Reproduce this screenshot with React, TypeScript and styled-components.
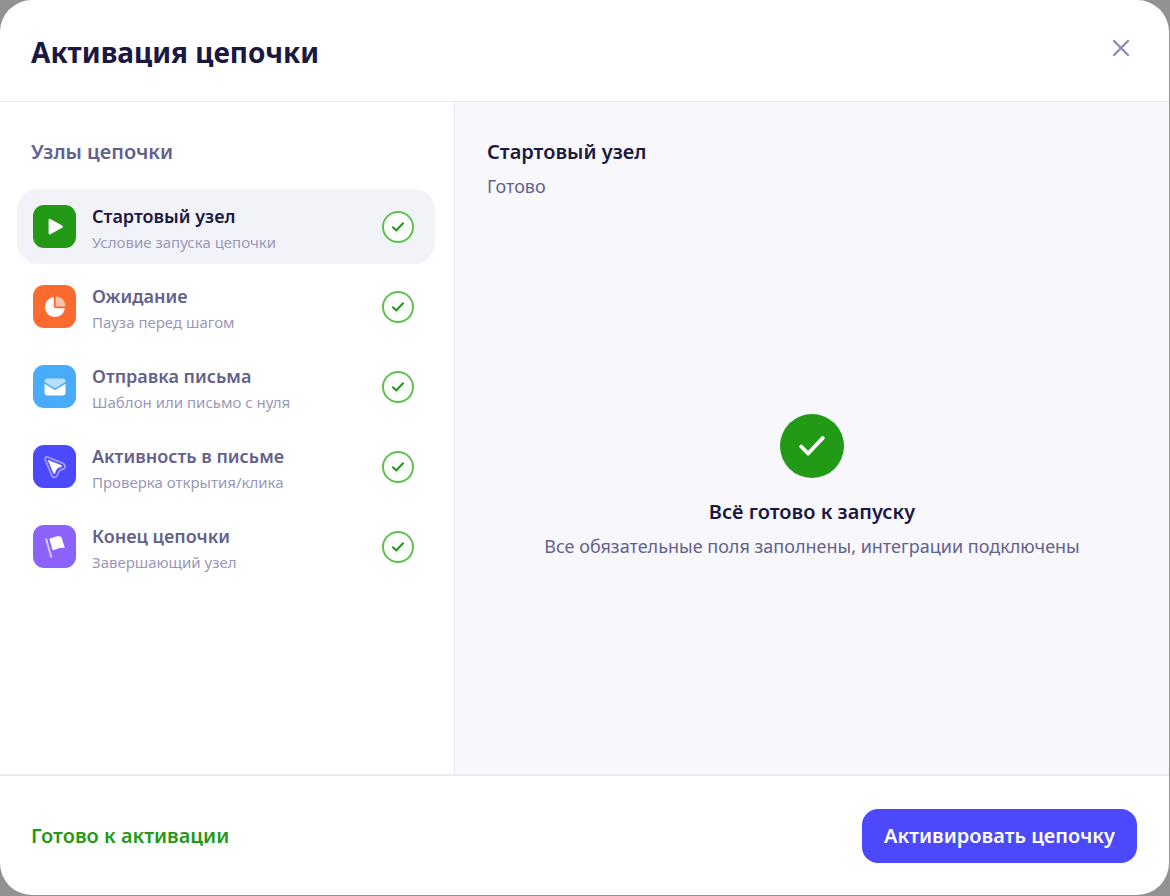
import React from "react";
import styled, { createGlobalStyle } from "styled-components";

const GlobalStyle = createGlobalStyle`
  *, *::before, *::after { box-sizing: border-box; }
  body {
    margin: 0;
    background: #929292;
    font-family: "Noto Sans", "Open Sans", sans-serif;
    color: #1b1841;
  }
  h1, h2, h3, p, ul { margin: 0; padding: 0; }
  button { font-family: inherit; border: 0; cursor: pointer; }
`;

const Backdrop = styled.div`
  min-height: 100vh;
  display: flex;
  padding: 0 1px 1px 0;
`;

const Dialog = styled.section`
  flex: 1;
  min-width: 0;
  display: flex;
  flex-direction: column;
  background: #fff;
  border-radius: 32px;
  overflow: hidden;
`;

const Header = styled.header`
  display: flex;
  justify-content: space-between;
  align-items: flex-start;
  height: 102px;
  padding: 32px 32px 0 31px;
  border-bottom: 1px solid #e9e9f1;
`;

const Title = styled.h1`
  font-size: 28px;
  line-height: 40px;
  font-weight: 700;
`;

const CloseButton = styled.button`
  display: grid;
  place-items: center;
  width: 32px;
  height: 32px;
  padding: 0;
  background: none;
`;

const Body = styled.div`
  flex: 1;
  display: grid;
  grid-template-columns: 455px minmax(0, 1fr);
`;

const Sidebar = styled.nav`
  padding: 36px 19px 32px 17px;
  border-right: 1px solid #e9e9f1;
`;

const SidebarTitle = styled.h2`
  padding-left: 14px;
  margin-bottom: 23px;
  font-size: 20px;
  line-height: 28px;
  font-weight: 600;
  color: #64618c;
`;

const NodeList = styled.ul`
  display: flex;
  flex-direction: column;
  gap: 5px;
  list-style: none;
`;

const NodeButton = styled.button<{ $active: boolean }>`
  display: flex;
  align-items: center;
  gap: 16px;
  width: 100%;
  height: 75px;
  padding: 0 21px 0 16px;
  text-align: left;
  border-radius: 21px;
  background: ${(p) => (p.$active ? "#f2f3f9" : "transparent")};
  color: ${(p) => (p.$active ? "#1b1841" : "#64618c")};
`;

const NodeIcon = styled.span<{ $color: string }>`
  flex: none;
  display: grid;
  place-items: center;
  width: 43px;
  height: 43px;
  border-radius: 11px;
  background: ${(p) => p.$color};
`;

const NodeText = styled.span`
  flex: 1;
  min-width: 0;
  display: flex;
  flex-direction: column;
  padding-top: 4px;
`;

const NodeName = styled.span`
  font-size: 18px;
  line-height: 28px;
  font-weight: 600;
`;

const NodeHint = styled.span`
  font-size: 15px;
  line-height: 25px;
  color: #9a98b9;
`;

const Status = styled.span`
  flex: none;
  display: grid;
  place-items: center;
  width: 32px;
  height: 32px;
  border: 2px solid #5cc24b;
  border-radius: 50%;
  background: #fff;
`;

const Detail = styled.main`
  display: flex;
  flex-direction: column;
  padding: 36px 32px;
  background: #f7f7fc;
`;

const Heading = styled.h2`
  font-size: 20px;
  line-height: 28px;
  font-weight: 600;
`;

const Note = styled.p`
  margin-top: 6px;
  font-size: 18px;
  line-height: 28px;
  color: #64618c;
`;

const Ready = styled.div`
  flex: 1;
  display: flex;
  flex-direction: column;
  align-items: center;
  justify-content: center;
  padding-top: 36px;
  text-align: center;
`;

const ReadyMark = styled.div`
  display: grid;
  place-items: center;
  width: 64px;
  height: 64px;
  margin-bottom: 20px;
  border-radius: 50%;
  background: #229a16;
`;

const Footer = styled.footer`
  display: flex;
  align-items: center;
  justify-content: space-between;
  height: 121px;
  padding: 0 32px 0 31px;
  border-top: 2px solid #e9e9f1;
`;

const FooterStatus = styled.p`
  font-size: 20px;
  line-height: 28px;
  font-weight: 600;
  color: #229a16;
`;

const PrimaryButton = styled.button`
  height: 54px;
  padding: 0 22px;
  border-radius: 16px;
  background: #4b49fb;
  color: #fff;
  font-size: 20px;
  line-height: 28px;
  font-weight: 600;
`;

const Check = ({ size, color, width }: { size: number; color: string; width: number }) => (
  <svg width={size} height={size} viewBox="0 0 24 24" fill="none" aria-hidden="true">
    <path d="M2 12.5 L8.5 19 L22 4.5" stroke={color} strokeWidth={width} strokeLinecap="round" strokeLinejoin="round" />
  </svg>
);

const PlayIcon = () => (
  <svg width="24" height="24" viewBox="0 0 24 24" aria-hidden="true">
    <path d="M6.8 5 L18.6 11.6 L6.8 18.2 Z" fill="#fff" stroke="#fff" strokeWidth="2.4" strokeLinejoin="round" />
  </svg>
);

const PieIcon = () => (
  <svg width="24" height="24" viewBox="0 0 24 24" fill="#fff" aria-hidden="true">
    <path d="M9.8 2.3 Q10.8 2.2 10.8 3.2 V11.2 Q10.8 13.2 12.8 13.2 H20.8 Q21.9 13.2 21.7 14.2 A10 10 0 1 1 9.8 2.3 Z" />
    <path d="M12.6 2.4 Q12.6 1.5 13.5 1.5 A9.4 9.4 0 0 1 22.4 10.5 Q22.4 11.5 21.4 11.5 H13.6 Q12.6 11.5 12.6 10.5 Z" opacity="0.6" />
  </svg>
);

const MailIcon = () => (
  <svg width="24" height="24" viewBox="0 0 24 24" fill="#fff" aria-hidden="true">
    <path d="M1.5 6.6 Q1.5 3.6 4.5 3.6 H19.5 Q22.5 3.6 22.5 6.6 V7 L13.2 12.8 Q12 13.5 10.8 12.8 L1.5 7 Z" opacity="0.6" />
    <path d="M1.5 8.8 L11 14.6 Q12 15.2 13 14.6 L22.5 8.8 V17.5 Q22.5 20.5 19.5 20.5 H4.5 Q1.5 20.5 1.5 17.5 Z" />
  </svg>
);

const CursorIcon = () => (
  <svg width="24" height="24" viewBox="0 0 24 24" aria-hidden="true">
    <path
      d="M4.7 2.2 L19.4 8.1 C23 9.5 22.9 13.4 19.8 14.2 C16.6 15 15.4 16.2 14.6 19.4 C13.7 23.1 9.9 23.4 8.5 19.8 L2.3 4.8 C1.5 2.6 2.9 1.5 4.7 2.2 Z"
      fill="none"
      stroke="#fff"
      strokeOpacity="0.45"
      strokeWidth="1.8"
    />
    <path
      d="M5.4 5.4 L18.3 10.6 Q19.3 11.2 18.2 11.6 C14.5 12.2 12.5 14.3 11.8 18.1 Q11.4 19.2 10.8 18.2 Z"
      fill="#fff"
      stroke="#fff"
      strokeWidth="0.8"
      strokeLinejoin="round"
    />
  </svg>
);

const FlagIcon = () => (
  <svg width="24" height="24" viewBox="0 0 24 24" aria-hidden="true">
    <path d="M3.2 4.2 L8.2 21.8" stroke="#fff" strokeOpacity="0.65" strokeWidth="2" strokeLinecap="round" />
    <path
      d="M7 3.6 C10.4 3 12.8 0.4 17.2 1.4 Q18.4 1.7 18.7 2.8 L21.6 12 Q21.9 13.3 20.6 13 C16.4 12.1 14 14.8 10.4 15.2 Q9.6 15.2 9.4 14.5 L6.5 4.6 Q6.3 3.7 7 3.6 Z"
      fill="#fff"
    />
  </svg>
);

const nodes = [
  { name: "Стартовый узел", hint: "Условие запуска цепочки", color: "#229a16", icon: <PlayIcon /> },
  { name: "Ожидание", hint: "Пауза перед шагом", color: "#fb6b30", icon: <PieIcon /> },
  { name: "Отправка письма", hint: "Шаблон или письмо с нуля", color: "#49acfb", icon: <MailIcon /> },
  { name: "Активность в письме", hint: "Проверка открытия/клика", color: "#4b49fb", icon: <CursorIcon /> },
  { name: "Конец цепочки", hint: "Завершающий узел", color: "#8b62fb", icon: <FlagIcon /> },
];

export default function App() {
  const [active, setActive] = React.useState(0);

  return (
    <>
      <GlobalStyle />
      <Backdrop>
        <Dialog role="dialog" aria-labelledby="dialog-title">
          <Header>
            <Title id="dialog-title">Активация цепочки</Title>
            <CloseButton type="button" aria-label="Закрыть">
              <svg width="18" height="18" viewBox="0 0 18 18" aria-hidden="true">
                <path d="M2 2 L16 16 M16 2 L2 16" stroke="#8e8bb3" strokeWidth="2.4" strokeLinecap="round" />
              </svg>
            </CloseButton>
          </Header>
          <Body>
            <Sidebar aria-labelledby="nodes-title">
              <SidebarTitle id="nodes-title">Узлы цепочки</SidebarTitle>
              <NodeList>
                {nodes.map((node, i) => (
                  <li key={node.name}>
                    <NodeButton type="button" $active={i === active} onClick={() => setActive(i)}>
                      <NodeIcon $color={node.color}>{node.icon}</NodeIcon>
                      <NodeText>
                        <NodeName>{node.name}</NodeName>
                        <NodeHint>{node.hint}</NodeHint>
                      </NodeText>
                      <Status>
                        <Check size={12} color="#229a16" width={4} />
                      </Status>
                    </NodeButton>
                  </li>
                ))}
              </NodeList>
            </Sidebar>
            <Detail>
              <Heading>{nodes[active].name}</Heading>
              <Note>Готово</Note>
              <Ready>
                <ReadyMark>
                  <Check size={26} color="#fff" width={3.4} />
                </ReadyMark>
                <Heading as="h3">Всё готово к запуску</Heading>
                <Note>Все обязательные поля заполнены, интеграции подключены</Note>
              </Ready>
            </Detail>
          </Body>
          <Footer>
            <FooterStatus>Готово к активации</FooterStatus>
            <PrimaryButton type="button">Активировать цепочку</PrimaryButton>
          </Footer>
        </Dialog>
      </Backdrop>
    </>
  );
}
